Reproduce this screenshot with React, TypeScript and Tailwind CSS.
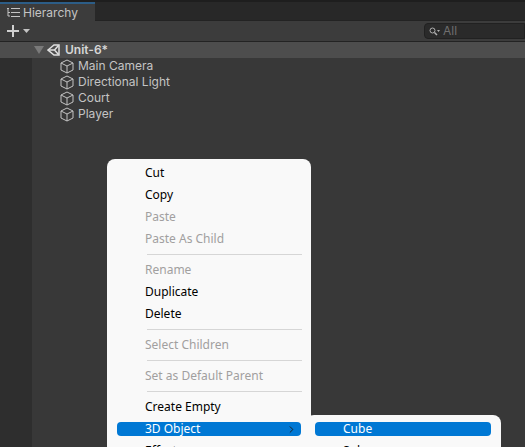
import { ChevronRight } from "lucide-react";

const objects = ["Main Camera", "Directional Light", "Court", "Player"];

function CubeIcon() {
  return (
    <svg width="14" height="15" viewBox="0 0 14 15" fill="none" stroke="#c4c4c4" strokeWidth="1" className="shrink-0">
      <path d="M7 1 L13 4 V11 L7 14 L1 11 V4 Z" />
      <path d="M1 4 L7 7 L13 4 M7 7 V14" />
    </svg>
  );
}

function UnityIcon() {
  return (
    <svg width="13" height="12" viewBox="0 0 13 12" fill="none" stroke="#e0e0e0" strokeWidth="1.5" className="shrink-0">
      <path d="M1 6 L7 1 L12 1 L12 11 L7 11 Z" />
      <path d="M1 6 H7.5 M7.5 6 L11.5 1.5 M7.5 6 L11.5 10.5" />
    </svg>
  );
}

function Item({ label, off, active }: { label: string; off?: boolean; active?: boolean }) {
  if (active) {
    return (
      <div className="mx-[10px] my-[4px] flex h-[14px] items-center justify-between rounded-[4px] bg-[#0078d4] pl-[28px] pr-[4px] text-white">
        <span>{label}</span>
        <ChevronRight size={11} color="#1b1b1b" />
      </div>
    );
  }
  return <div className={"flex h-[22px] items-center pl-[38px] " + (off ? "text-[#a19f9f]" : "text-black")}>{label}</div>;
}

function Sep() {
  return <div className="mb-[4px] ml-[40px] mr-[9px] mt-[4px] h-px bg-[#d6d6d6]" />;
}

export default function App() {
  return (
    <div className="relative flex h-[447px] w-[525px] flex-col overflow-hidden bg-[#383838] font-['Inter',sans-serif] text-[12px] text-[#c4c4c4]">
      <div className="h-[2px] shrink-0 bg-[#1e1e1e]" />
      <div className="flex h-[19px] shrink-0 bg-[#282828]">
        <div className="flex w-[95px] items-center gap-[3px] border-t-2 border-[#2c5d87] bg-[#3c3c3c] pl-[7px]">
          <svg width="13" height="11" viewBox="0 0 13 11" stroke="#c4c4c4" fill="none" strokeWidth="1">
            <path d="M0 1.5 H2 M1 1.5 V9 M4 1.5 H13 M4 5.5 H13 M4 9.5 H13 M1 5.5 H3 M1 9 H3" />
          </svg>
          <span>Hierarchy</span>
        </div>
        <div className="flex-1 border-b border-[#232323]" />
      </div>
      <div className="flex h-[21px] shrink-0 items-center border-b border-[#232323] bg-[#3c3c3c] pl-[7px]">
        <svg width="12" height="12" viewBox="0 0 12 12" stroke="#d0d0d0" strokeWidth="2">
          <path d="M6 0 V12 M0 6 H12" />
        </svg>
        <svg width="7" height="4" viewBox="0 0 7 4" className="ml-[4px]" fill="#c4c4c4">
          <path d="M0 0 H7 L3.5 4 Z" />
        </svg>
        <div className="ml-[394px] flex h-[16px] flex-1 items-center rounded-l-[4px] border border-[#212121] bg-[#2a2a2a] pl-[4px] text-[#6f6f6f]">
          <svg width="11" height="9" viewBox="0 0 11 9" fill="none" stroke="#b0b0b0" strokeWidth="1">
            <circle cx="3.5" cy="3.5" r="2.5" />
            <path d="M5.5 5.5 L8 8" strokeWidth="1.5" />
            <path d="M8 3 H11 L9.5 5 Z" fill="#b0b0b0" stroke="none" />
          </svg>
          <span className="ml-[3px]">All</span>
        </div>
      </div>
      <div className="flex min-h-0 flex-1">
        <div className="mt-[16px] w-[32px] shrink-0 bg-[#2e2e2e]" />
        <div className="flex-1" />
      </div>
      <div className="absolute left-0 right-0 top-[42px] flex h-[16px] items-center bg-[#4d4d4d] pl-[34px] font-semibold text-[#d6d6d6]">
        <svg width="10" height="8" viewBox="0 0 10 8" className="mr-[3px]">
          <path d="M0 0 H10 L5 8 Z" fill="#7a7a7a" />
        </svg>
        <UnityIcon />
        <span className="ml-[5px]">Unit-6*</span>
      </div>
      <div className="absolute left-[60px] top-[58px] flex flex-col">
        {objects.map((o) => (
          <div key={o} className="flex h-[16px] items-center gap-[4px]">
            <CubeIcon />
            <span>{o}</span>
          </div>
        ))}
      </div>

      <div className="absolute left-[107px] top-[159px] w-[204px] rounded-t-[8px] bg-[#f9f9f9] pt-[3px] font-['Noto_Sans',sans-serif] text-[12px]">
        <Item label="Cut" />
        <Item label="Copy" />
        <Item label="Paste" off />
        <Item label="Paste As Child" off />
        <Sep />
        <Item label="Rename" off />
        <Item label="Duplicate" />
        <Item label="Delete" />
        <Sep />
        <Item label="Select Children" off />
        <Sep />
        <Item label="Set as Default Parent" off />
        <Sep />
        <Item label="Create Empty" />
        <Item label="3D Object" active />
        <Item label="Effects" />
      </div>
      <div className="absolute left-[306px] top-[415px] w-[195px] rounded-t-[8px] bg-[#f9f9f9] pt-[7px] font-['Noto_Sans',sans-serif] text-[12px]">
        <div className="ml-[9px] mr-[10px] flex h-[14px] items-center rounded-[4px] bg-[#0078d4] pl-[28px] text-white">Cube</div>
        <div className="mt-[4px] flex h-[22px] items-center pl-[37px] text-black">Sphere</div>
      </div>
    </div>
  );
}
